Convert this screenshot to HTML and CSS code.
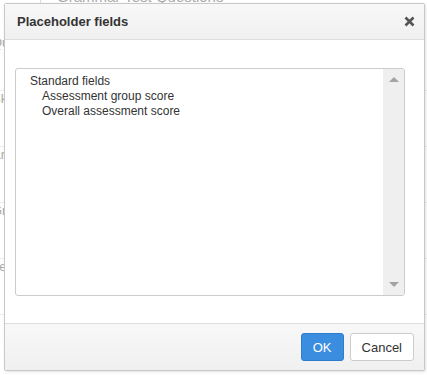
FILE: index.html
```html
<!doctype html>
<html>
<head>
	<meta charset="utf-8" />
	<title>Placeholder fields</title>
	<link rel="stylesheet" href="styles.css">
</head>
<body>
	<div class="page">
		<div class="page-title">Grammar Test Questions</div>
		<ul class="page-list">
			<li>Question</li>
			<li>Skill</li>
			<li>Area</li>
			<li>Group</li>
			<li>Level</li>
		</ul>
	</div>

	<div class="dialog">
		<header class="dialog-head">
			<h1>Placeholder fields</h1>
			<svg class="close" width="11" height="11" viewBox="0 0 11 11">
				<path d="M1.5 1.5 L9.5 9.5 M9.5 1.5 L1.5 9.5" stroke="#555" stroke-width="2.6" />
			</svg>
		</header>
		<div class="dialog-body">
			<div class="listbox">
				<div class="list">
					<div class="group">Standard fields</div>
					<div class="item">Assessment group score</div>
					<div class="item">Overall assessment score</div>
				</div>
				<div class="scrollbar">
					<span class="arrow up"></span>
					<span class="arrow down"></span>
				</div>
			</div>
		</div>
		<footer class="dialog-foot">
			<button class="btn primary">OK</button>
			<button class="btn">Cancel</button>
		</footer>
	</div>
</body>
</html>
```

FILE: styles.css
```css
html, body {
	margin: 0;
	height: 100%;
	background: #fff;
	font-family: "Liberation Sans", Arial, sans-serif;
	color: #333;
	overflow: hidden;
}

.page {
	position: relative;
	height: 100%;
}

.page-title {
	margin-left: 40px;
	margin-top: -12px;
	font-size: 15px;
	color: #aaa;
	border-left: 1px solid #ddd;
	padding-left: 16px;
}

.page-list {
	list-style: none;
	margin: 30px 0 0 -8px;
	padding: 0;
	color: #aaa;
	font-size: 13px;
}

.page-list li {
	height: 55px;
	border-bottom: 1px solid #eee;
}

/* modal sits on top of the page */
.dialog {
	position: absolute;
	top: 3px;
	left: 4px;
	width: 419px;
	height: 366px;
	display: flex;
	flex-direction: column;
	background: #fff;
	border: 1px solid #c8c8c8;
	border-radius: 2px;
	box-shadow: 1px 1px 3px rgba(0, 0, 0, 0.12);
}

.dialog-head {
	height: 35px;
	display: flex;
	align-items: center;
	justify-content: space-between;
	padding: 0 9px 0 12px;
	background: linear-gradient(#f8f8f8, #f0f0f0);
	border-bottom: 1px solid #ddd;
}

.dialog-head h1 {
	margin: 0;
	font-size: 13px;
	font-weight: bold;
	color: #333;
}

.close {
	display: block;
}

.dialog-body {
	flex: 1;
	padding: 28px 19px 27px 10px;
}

.listbox {
	height: 100%;
	box-sizing: border-box;
	display: flex;
	border: 1px solid #ccc;
	border-radius: 3px;
	overflow: hidden;
}

.list {
	flex: 1;
	padding: 5px 14px;
	font-size: 12px;
	line-height: 15px;
}

.item {
	padding-left: 12px;
}

.scrollbar {
	width: 21px;
	background: #efefef;
	display: flex;
	flex-direction: column;
	justify-content: space-between;
	align-items: center;
	padding: 8px 0;
}

.arrow {
	width: 0;
	height: 0;
	border-left: 5px solid transparent;
	border-right: 5px solid transparent;
}

.arrow.up { border-bottom: 5px solid #a3a3a3; }
.arrow.down { border-top: 5px solid #a3a3a3; }

.dialog-foot {
	height: 46px;
	display: flex;
	align-items: center;
	justify-content: flex-end;
	gap: 6px;
	padding: 0 10px;
	background: linear-gradient(#f8f8f8, #f0f0f0);
	border-top: 1px solid #ddd;
}

.btn {
	height: 28px;
	padding: 0 11px;
	font-family: inherit;
	font-size: 13px;
	color: #333;
	background: #fff;
	border: 1px solid #ccc;
	border-radius: 3px;
}

.btn.primary {
	width: 43px;
	color: #fff;
	background: #3b8de0;
	border-color: #2e7ccc;
}
```
